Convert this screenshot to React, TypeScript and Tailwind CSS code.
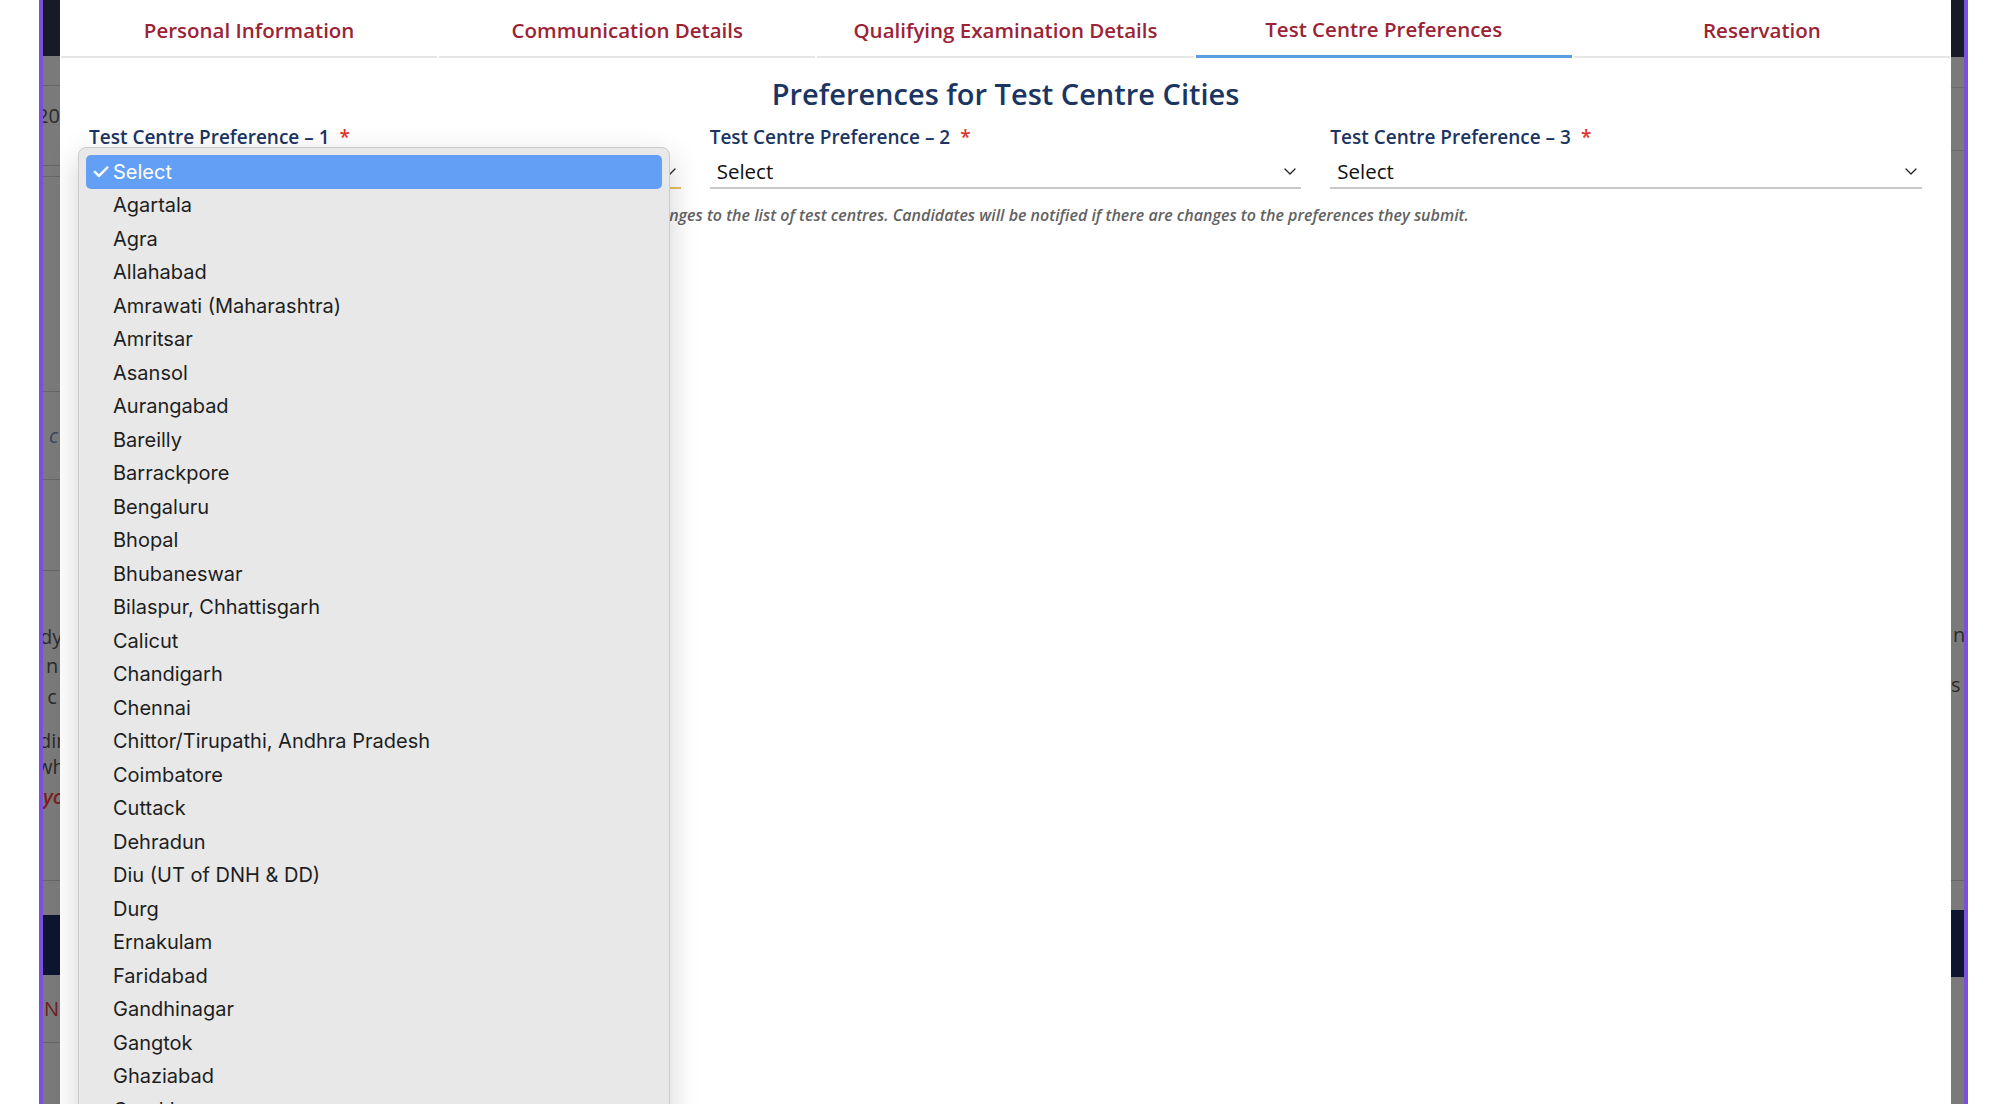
const tabs = [
  "Personal Information",
  "Communication Details",
  "Qualifying Examination Details",
  "Test Centre Preferences",
  "Reservation",
];

const cities = [
  "Select",
  "Agartala",
  "Agra",
  "Allahabad",
  "Amrawati (Maharashtra)",
  "Amritsar",
  "Asansol",
  "Aurangabad",
  "Bareilly",
  "Barrackpore",
  "Bengaluru",
  "Bhopal",
  "Bhubaneswar",
  "Bilaspur, Chhattisgarh",
  "Calicut",
  "Chandigarh",
  "Chennai",
  "Chittor/Tirupathi, Andhra Pradesh",
  "Coimbatore",
  "Cuttack",
  "Dehradun",
  "Diu (UT of DNH & DD)",
  "Durg",
  "Ernakulam",
  "Faridabad",
  "Gandhinagar",
  "Gangtok",
  "Ghaziabad",
  "Gorakhpur",
  "Gulbarga",
  "Guntur",
];

function Chevron() {
  return (
    <svg width="12" height="7" viewBox="0 0 12 7" fill="none" className="shrink-0">
      <polyline points="1,1 6,6 11,1" stroke="#222" strokeWidth="1.3" strokeLinecap="round" strokeLinejoin="round" />
    </svg>
  );
}

function SelectField({ n, focused }: { n: number; focused?: boolean }) {
  return (
    <div className="flex flex-col">
      <label className="text-[19px] leading-[26px] font-semibold text-[#1b3563] whitespace-nowrap">
        Test Centre Preference – {n}
        <span className="ml-[10px] text-[#e0322b]">*</span>
      </label>
      <div
        className={`flex h-[39px] items-center justify-between border-b-2 pt-[6px] pl-[7px] pr-[5px] ${
          focused ? "border-[#e7bf5e]" : "border-[#c9c9c9]"
        }`}
      >
        <span className="text-[20.5px] text-[#111]">Select</span>
        <Chevron />
      </div>
    </div>
  );
}

// dimmed page behind the modal, only a sliver shows on each side
function LeftBackdrop() {
  return (
    <div className="flex w-[17px] shrink-0 flex-col overflow-hidden bg-[#7a7a7a] text-[20px] leading-[26px] text-[#2b2b2b] whitespace-nowrap">
      <div className="h-[56px] shrink-0 bg-[#181b27]" />
      <div className="h-[29px] shrink-0" />
      <div className="flex h-[61px] shrink-0 items-center border-t border-[#666] -ml-[6px]">20</div>
      <div className="h-[19px] shrink-0" />
      <div className="h-[11px] shrink-0 border-t border-[#666]" />
      <div className="h-[215px] shrink-0 border-t border-[#666]" />
      <div className="flex h-[88px] shrink-0 items-center border-t border-[#666] pl-[6px] italic text-[#3c4560]">c</div>
      <div className="h-[91px] shrink-0 border-t border-[#666]" />
      <div className="flex h-[310px] shrink-0 flex-col border-t border-[#666] pt-[53px]">
        <span className="-ml-[3px] h-[29px]">dy</span>
        <span className="h-[31px] pl-[3px]">n</span>
        <span className="-ml-[6px] h-[44px]">i c</span>
        <span className="-ml-[4px] h-[26px]">din</span>
        <span className="-ml-[6px] h-[30px]">wh</span>
        <span className="italic font-semibold text-[#7a2020]">yo</span>
      </div>
      <div className="h-[35px] shrink-0 border-t border-[#666]" />
      <div className="h-[60px] shrink-0 bg-[#0d1530]" />
      <div className="flex h-[67px] shrink-0 items-center pl-[1px] text-[#6e1f1f]">No</div>
      <div className="flex-1 border-t border-[#666]" />
    </div>
  );
}

function RightBackdrop() {
  return (
    <div className="flex w-[13px] shrink-0 flex-col overflow-hidden bg-[#7a7a7a] text-[20px] leading-[26px] text-[#2b2b2b] whitespace-nowrap">
      <div className="h-[57px] shrink-0 bg-[#181b27]" />
      <div className="h-[30px] shrink-0" />
      <div className="h-[63px] shrink-0 border-t border-[#6a6a6a]" />
      <div className="h-[472px] shrink-0 border-t border-[#6a6a6a]" />
      <div className="h-[50px] shrink-0 pl-[2px]">n</div>
      <div className="h-[208px] shrink-0">s</div>
      <div className="h-[30px] shrink-0 border-t border-[#666]" />
      <div className="h-[67px] shrink-0 bg-[#0d1530]" />
      <div className="flex-1" />
    </div>
  );
}

function Dropdown() {
  return (
    <div className="absolute left-[18px] top-[147px] h-[1000px] w-[592px] overflow-hidden rounded-[8px] border border-[#cbcbcb] bg-[#e8e8e8] px-[7px] pt-[7px] shadow-[0_10px_30px_rgba(0,0,0,0.18)]">
      {cities.map((c, i) => (
        <div
          key={c}
          className={`flex h-[33.5px] items-center rounded-[5px] text-[20px] ${
            i === 0 ? "bg-[#63a0f5] text-white" : "text-[#1e1e1e]"
          }`}
          style={{ fontFamily: "Inter, sans-serif" }}
        >
          <span className="w-[27px] shrink-0 pl-[5px] text-[22px] font-medium">{i === 0 ? "✓" : ""}</span>
          {c}
        </div>
      ))}
    </div>
  );
}

export default function App() {
  return (
    <div className="flex h-[1104px] w-[2012px] overflow-hidden bg-white" style={{ fontFamily: "'Open Sans', sans-serif" }}>
      <div className="w-[39px] shrink-0" />
      <div className="w-[4px] shrink-0 bg-[#7d4fdf]" />
      <LeftBackdrop />

      <div className="relative flex w-[1891px] shrink-0 flex-col bg-white">
        {/* tabs */}
        <div className="flex h-[58px] shrink-0">
          {tabs.map((t, i) => (
            <div
              key={t}
              className={`mx-[1px] flex flex-1 items-center justify-center pt-[4px] text-[20.5px] font-semibold text-[#9b2335] ${
                i === 3 ? "border-b-[3px] border-[#5b9de0]" : "border-b-2 border-[#e6e6e6]"
              }`}
            >
              {t}
            </div>
          ))}
        </div>

        <h2 className="mt-[18px] text-center text-[29px] leading-[36px] font-semibold text-[#1b3563]">
          Preferences for Test Centre Cities
        </h2>

        <div className="mt-[12px] grid grid-cols-3 gap-[29px] px-[29px]">
          <SelectField n={1} focused />
          <SelectField n={2} />
          <SelectField n={3} />
        </div>

        <p className="mt-[14px] pl-[41px] pr-[29px] text-[16px] leading-[24px] font-semibold italic text-[#626262]">
          Note: The Organising Institute reserves the right to make any additions or changes to the list of test
          centres. Candidates will be notified if there are changes to the preferences they submit.
        </p>

        <Dropdown />
      </div>

      <RightBackdrop />
      <div className="w-[4px] shrink-0 bg-[#7d4fdf]" />
      <div className="flex-1" />
    </div>
  );
}
